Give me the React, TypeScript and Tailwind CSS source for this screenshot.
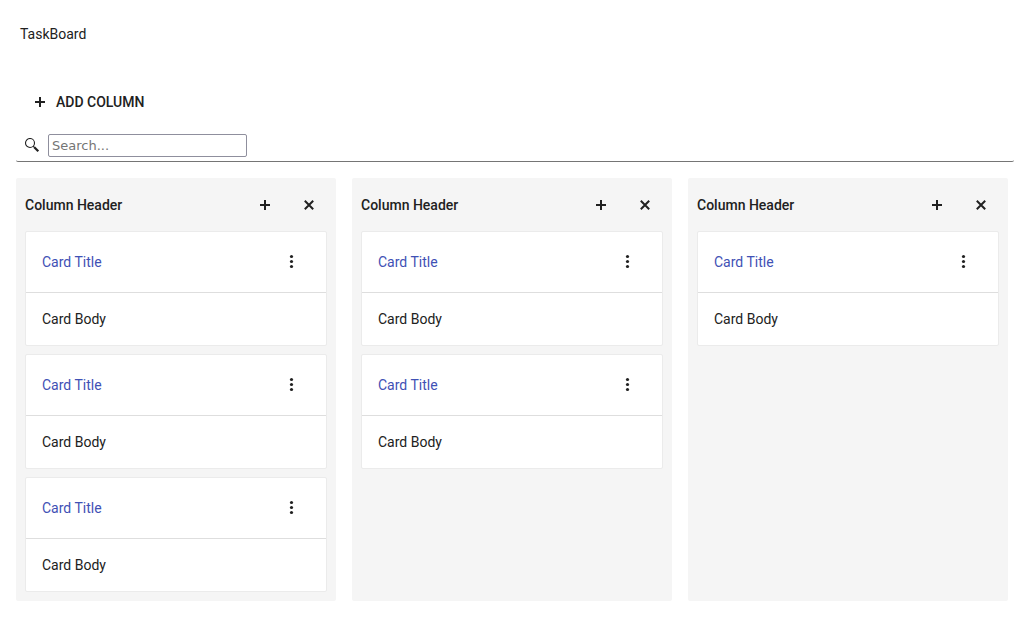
import React from "react";

type CardData = { title: string; body: string };
type ColumnData = { header: string; cards: CardData[] };

const makeCards = (count: number): CardData[] =>
  Array.from({ length: count }, () => ({ title: "Card Title", body: "Card Body" }));

const columns: ColumnData[] = [
  { header: "Column Header", cards: makeCards(3) },
  { header: "Column Header", cards: makeCards(2) },
  { header: "Column Header", cards: makeCards(1) },
];

function PlusIcon() {
  return (
    <svg className="size-4" viewBox="0 0 16 16" fill="currentColor" aria-hidden="true">
      <path d="M7 3h2v4h4v2H9v4H7V9H3V7h4z" />
    </svg>
  );
}

function CloseIcon() {
  return (
    <svg className="size-4" viewBox="0 0 16 16" fill="none" stroke="currentColor" strokeWidth="2" aria-hidden="true">
      <path d="M3.8 3.8l8.4 8.4M12.2 3.8l-8.4 8.4" />
    </svg>
  );
}

function MoreIcon() {
  return (
    <svg className="size-4" viewBox="0 0 16 16" fill="currentColor" aria-hidden="true">
      <circle cx="7.5" cy="2.5" r="1.6" />
      <circle cx="7.5" cy="7.5" r="1.6" />
      <circle cx="7.5" cy="12.5" r="1.6" />
    </svg>
  );
}

function SearchIcon() {
  return (
    <svg className="size-4" viewBox="0 0 16 16" fill="none" stroke="currentColor" aria-hidden="true">
      <circle cx="6" cy="5" r="4.5" strokeWidth="1.1" />
      <path d="M9.2 8.2l1.6 1.6" strokeWidth="1.2" />
      <path d="M10.3 9.3l4 4" strokeWidth="2.2" />
    </svg>
  );
}

function Card({ title, body }: CardData) {
  return (
    <article className="rounded-xs border border-[#ebebeb] bg-white">
      <header className="flex h-[61px] items-center justify-between border-b border-[#dedede] pr-5 pl-4">
        <a href="#card" className="text-[#3f51b5]">
          {title}
        </a>
        <button type="button" aria-label="Card actions" className="flex size-7 items-center justify-center">
          <MoreIcon />
        </button>
      </header>
      <p className="px-4 py-4">{body}</p>
    </article>
  );
}

function Column({ header, cards }: ColumnData) {
  return (
    <section className="w-80 shrink-0 rounded-xs bg-[#f5f5f5] px-[9px] pb-[9px]">
      <header className="flex h-[53px] items-center justify-between">
        <h2 className="font-medium">{header}</h2>
        <div className="flex gap-4">
          <button type="button" aria-label="Add card" className="flex size-7 items-center justify-center">
            <PlusIcon />
          </button>
          <button type="button" aria-label="Delete column" className="mr-1 flex size-7 items-center justify-center">
            <CloseIcon />
          </button>
        </div>
      </header>
      <div className="flex flex-col gap-2">
        {cards.map((card, i) => (
          <Card key={i} {...card} />
        ))}
      </div>
    </section>
  );
}

export default function App() {
  return (
    <main className="bg-white p-4 font-['Roboto',sans-serif] text-sm leading-5 text-[#212121]">
      <h1 className="px-1 py-2">TaskBoard</h1>
      <div className="mt-8 rounded-xs border-b border-[#757575]">
        <button type="button" className="flex h-9 items-center gap-2 px-4 font-medium">
          <PlusIcon />
          ADD COLUMN
        </button>
        <div className="mt-3 flex items-center gap-2 px-2 pt-0.5 pb-1">
          <label htmlFor="search" aria-label="Search">
            <SearchIcon />
          </label>
          <input
            id="search"
            type="text"
            placeholder="Search..."
            className="h-[23px] w-[199px] rounded-xs border border-[#8f8f9d] px-[3px] font-['DejaVu_Sans',sans-serif] text-[13px] placeholder:text-[#757575]"
          />
        </div>
      </div>
      <div className="mt-4 flex gap-4">
        {columns.map((column, i) => (
          <Column key={i} {...column} />
        ))}
      </div>
    </main>
  );
}
